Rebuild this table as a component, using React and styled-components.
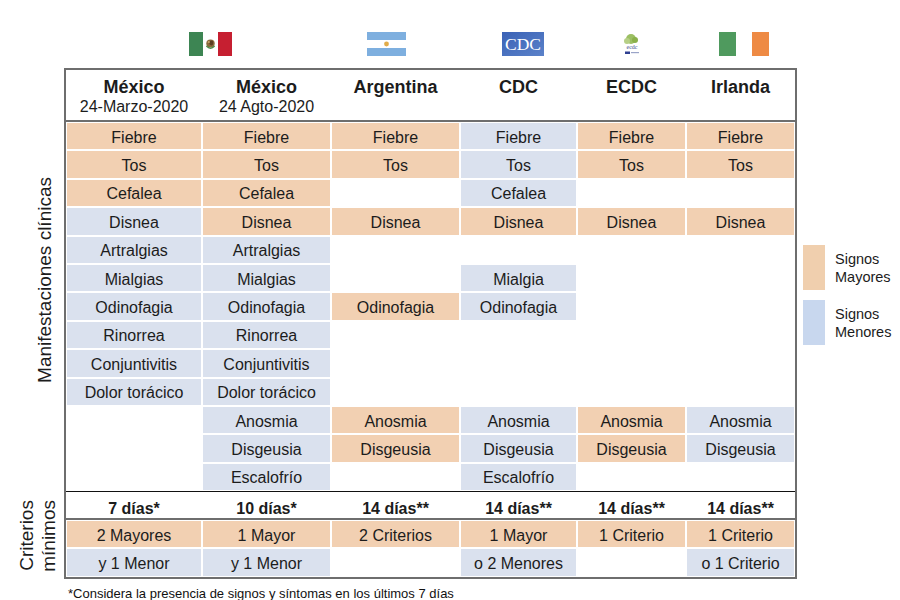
import React from 'react';
import styled, { createGlobalStyle } from 'styled-components';

const GlobalStyle = createGlobalStyle`
  html, body {
    margin: 0;
    padding: 0;
    background: #fff;
  }
  body {
    font-family: 'Liberation Sans', Arial, sans-serif;
    color: #1c1c1c;
  }
`;

const COLS = '136px 129px 129px 117px 109px 109px';

const TONES = {
  major: '#f2d0b2',
  minor: '#dae1ee',
};

const Page = styled.div`
  width: 900px;
  height: 600px;
  overflow: hidden;
  padding-top: 32px;
  box-sizing: border-box;
`;

const LogoRow = styled.div`
  display: grid;
  grid-template-columns: ${COLS};
  height: 24px;
  margin-left: 66px;
  margin-bottom: 12px;
`;

const LogoSlot = styled.div`
  grid-column: span ${(p) => p.$span || 1};
  justify-self: center;
  display: flex;
  margin-left: ${(p) => (p.$shift > 0 ? p.$shift * 2 : 0)}px;
  margin-right: ${(p) => (p.$shift < 0 ? -p.$shift * 2 : 0)}px;
`;

const Body = styled.div`
  display: flex;
  align-items: flex-start;
`;

const Side = styled.div`
  width: 64px;
  display: flex;
  flex-direction: column;
`;

const SideBox = styled.div`
  height: ${(p) => p.$h}px;
  display: flex;
  align-items: center;
  justify-content: flex-end;
  padding-right: ${(p) => p.$pad}px;
  box-sizing: border-box;
`;

const SideLabel = styled.div`
  writing-mode: vertical-rl;
  transform: rotate(180deg);
  font-size: 19px;
  line-height: 22px;
  text-align: center;
  white-space: nowrap;
  color: #1c1c1c;
`;

const Table = styled.div`
  display: grid;
  grid-template-columns: ${COLS};
  grid-template-rows: 52px repeat(13, 28.4px) 29px repeat(2, 28.4px);
  border: 2px solid #6e6e6e;
`;

const HeadCell = styled.div`
  border-bottom: 2px solid #6e6e6e;
  display: flex;
  flex-direction: column;
  align-items: center;
  padding-top: 8px;
  box-sizing: border-box;
`;

const HeadName = styled.div`
  font-size: 18px;
  font-weight: bold;
  line-height: 19px;
`;

const HeadDate = styled.div`
  font-size: 16px;
  line-height: 19px;
`;

const Cell = styled.div`
  background: ${(p) => (p.$tone ? TONES[p.$tone] : '#fff')};
  border: 1px solid #fff;
  box-sizing: border-box;
  display: flex;
  align-items: center;
  justify-content: center;
  padding-top: 3px;
  font-size: 16px;
  white-space: nowrap;
`;

const DaysCell = styled.div`
  border-top: 1px solid #111;
  border-bottom: 2px solid #6e6e6e;
  box-sizing: border-box;
  display: flex;
  align-items: center;
  justify-content: center;
  padding-top: 7px;
  font-size: 16px;
  font-weight: bold;
`;

const Legend = styled.div`
  display: flex;
  flex-direction: column;
  gap: 10px;
  margin-left: 6px;
  margin-top: 177px;
`;

const LegendItem = styled.div`
  display: flex;
  align-items: center;
  gap: 10px;
  height: 45px;
`;

const Swatch = styled.div`
  width: 22px;
  height: 45px;
  background: ${(p) => p.$color};
`;

const LegendText = styled.div`
  font-size: 14.5px;
  line-height: 18px;
`;

const Footnote = styled.div`
  margin: 6px 0 0 68px;
  font-size: 13px;
  line-height: 15px;
  color: #111;
  white-space: nowrap;
`;

const M = 'major';
const m = 'minor';

const headers = [
  { name: 'México', date: '24-Marzo-2020' },
  { name: 'México', date: '24 Agto-2020' },
  { name: 'Argentina' },
  { name: 'CDC' },
  { name: 'ECDC' },
  { name: 'Irlanda' },
];

const symptoms = [
  [['Fiebre', M], ['Fiebre', M], ['Fiebre', M], ['Fiebre', m], ['Fiebre', M], ['Fiebre', M]],
  [['Tos', M], ['Tos', M], ['Tos', M], ['Tos', m], ['Tos', M], ['Tos', M]],
  [['Cefalea', M], ['Cefalea', M], null, ['Cefalea', m], null, null],
  [['Disnea', m], ['Disnea', M], ['Disnea', M], ['Disnea', M], ['Disnea', M], ['Disnea', M]],
  [['Artralgias', m], ['Artralgias', m], null, null, null, null],
  [['Mialgias', m], ['Mialgias', m], null, ['Mialgia', m], null, null],
  [['Odinofagia', m], ['Odinofagia', m], ['Odinofagia', M], ['Odinofagia', m], null, null],
  [['Rinorrea', m], ['Rinorrea', m], null, null, null, null],
  [['Conjuntivitis', m], ['Conjuntivitis', m], null, null, null, null],
  [['Dolor torácico', m], ['Dolor torácico', m], null, null, null, null],
  [null, ['Anosmia', m], ['Anosmia', M], ['Anosmia', m], ['Anosmia', M], ['Anosmia', m]],
  [null, ['Disgeusia', m], ['Disgeusia', M], ['Disgeusia', m], ['Disgeusia', M], ['Disgeusia', m]],
  [null, ['Escalofrío', m], null, ['Escalofrío', m], null, null],
];

const days = ['7 días*', '10 días*', '14 días**', '14 días**', '14 días**', '14 días**'];

const criteria = [
  [['2 Mayores', M], ['1 Mayor', M], ['2 Criterios', M], ['1 Mayor', M], ['1 Criterio', M], ['1 Criterio', M]],
  [['y 1 Menor', m], ['y 1 Menor', m], null, ['o 2 Menores', m], null, ['o 1 Criterio', m]],
];

const MexicoFlag = () => (
  <svg width="43" height="24" viewBox="0 0 43 24">
    <rect x="0" y="0" width="14" height="24" fill="#3d8553" />
    <rect x="14" y="0" width="15" height="24" fill="#fff" />
    <rect x="29" y="0" width="14" height="24" fill="#c61f31" />
    <ellipse cx="21.5" cy="11.5" rx="4.2" ry="4" fill="#8a6a3c" />
    <ellipse cx="22.3" cy="11" rx="2" ry="2.4" fill="#5a3e22" />
    <path d="M17.4 14 Q21.5 18.5 25.6 14" stroke="#4f8a4a" strokeWidth="1.4" fill="none" />
    <circle cx="19.8" cy="10" r="1.1" fill="#c9a46a" />
  </svg>
);

const ArgentinaFlag = () => (
  <svg width="39" height="24" viewBox="0 0 39 24">
    <rect x="0" y="0" width="39" height="8" fill="#7eafdf" />
    <rect x="0" y="8" width="39" height="8" fill="#fff" />
    <rect x="0" y="16" width="39" height="8" fill="#7eafdf" />
    <circle cx="19.5" cy="12" r="2.4" fill="#e1ac4a" />
  </svg>
);

const CdcLogo = () => (
  <svg width="42" height="24" viewBox="0 0 42 24">
    <defs>
      <linearGradient id="cdcg" x1="0" y1="0" x2="1" y2="1">
        <stop offset="0" stopColor="#3a62b6" />
        <stop offset="1" stopColor="#5b82c9" />
      </linearGradient>
    </defs>
    <rect x="0" y="0" width="42" height="24" fill="url(#cdcg)" />
    <text
      x="21"
      y="18"
      textAnchor="middle"
      fontFamily="'Liberation Serif', serif"
      fontSize="17"
      fill="#fff"
      textLength="36"
      lengthAdjust="spacingAndGlyphs"
    >
      CDC
    </text>
  </svg>
);

const EcdcLogo = () => (
  <svg width="26" height="24" viewBox="0 0 26 24">
    <circle cx="12" cy="7" r="5" fill="#9cbf63" />
    <circle cx="8" cy="9" r="3" fill="#b6cf86" />
    <circle cx="16" cy="8" r="3" fill="#8ab04a" />
    <text x="13" y="17" textAnchor="middle" fontFamily="'Liberation Serif', serif" fontSize="6" fill="#3a4a8a">
      ecdc
    </text>
    <rect x="6" y="19.5" width="5" height="2.5" fill="#2e3f91" />
    <rect x="12" y="20" width="8" height="1.2" fill="#9aa4c8" />
  </svg>
);

const IrelandFlag = () => (
  <svg width="50" height="24" viewBox="0 0 50 24">
    <rect x="0" y="0" width="17" height="24" fill="#4f9a5e" />
    <rect x="33" y="0" width="17" height="24" fill="#ee8a44" />
  </svg>
);

const App = () => (
  <Page>
    <GlobalStyle />
    <LogoRow>
      <LogoSlot $span={2} $shift={12}>
        <MexicoFlag />
      </LogoSlot>
      <LogoSlot $shift={-9}>
        <ArgentinaFlag />
      </LogoSlot>
      <LogoSlot $shift={4}>
        <CdcLogo />
      </LogoSlot>
      <LogoSlot>
        <EcdcLogo />
      </LogoSlot>
      <LogoSlot $shift={3}>
        <IrelandFlag />
      </LogoSlot>
    </LogoRow>

    <Body>
      <Side>
        <SideBox $h={424} $pad={8}>
          <SideLabel>Manifestaciones clínicas</SideLabel>
        </SideBox>
        <SideBox $h={88} $pad={4}>
          <SideLabel>
            Criterios
            <br />
            mínimos
          </SideLabel>
        </SideBox>
      </Side>

      <Table>
        {headers.map((h, i) => (
          <HeadCell key={`h${i}`}>
            <HeadName>{h.name}</HeadName>
            {h.date && <HeadDate>{h.date}</HeadDate>}
          </HeadCell>
        ))}
        {symptoms.map((row, r) =>
          row.map((c, i) => (
            <Cell key={`s${r}-${i}`} $tone={c && c[1]}>
              {c && c[0]}
            </Cell>
          ))
        )}
        {days.map((d, i) => (
          <DaysCell key={`d${i}`}>{d}</DaysCell>
        ))}
        {criteria.map((row, r) =>
          row.map((c, i) => (
            <Cell key={`c${r}-${i}`} $tone={c && c[1]}>
              {c && c[0]}
            </Cell>
          ))
        )}
      </Table>

      <Legend>
        <LegendItem>
          <Swatch $color="#f0cfae" />
          <LegendText>
            Signos
            <br />
            Mayores
          </LegendText>
        </LegendItem>
        <LegendItem>
          <Swatch $color="#c8d7ee" />
          <LegendText>
            Signos
            <br />
            Menores
          </LegendText>
        </LegendItem>
      </Legend>
    </Body>

    <Footnote>*Considera la presencia de signos y síntomas en los últimos 7 días</Footnote>
  </Page>
);

export default App;
